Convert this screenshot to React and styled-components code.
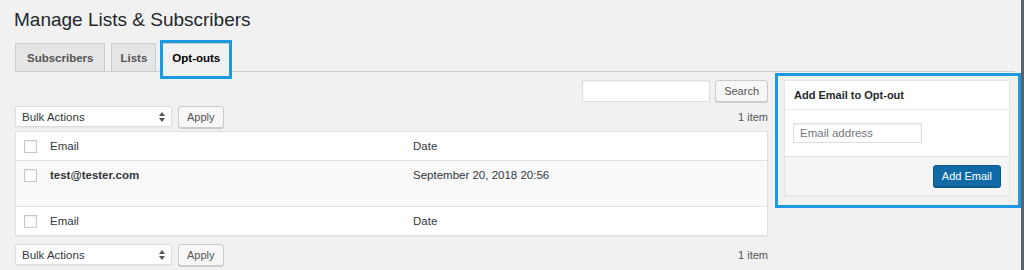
import styled, { createGlobalStyle } from "styled-components";

const GlobalStyles = createGlobalStyle`
  html, body {
    margin: 0;
    padding: 0;
    background: #f1f1f1;
  }
  body {
    font-family: "Liberation Sans", Arial, sans-serif;
    color: #32373c;
    font-size: 11px;
  }
`;

const Screen = styled.div`
  display: flex;
  width: 1024px;
  height: 270px;
  overflow: hidden;
`;

const Wrap = styled.div`
  flex: 1;
  display: flex;
  align-items: flex-start;
  padding: 8px 0 0 15px;
`;

const Edge = styled.div`
  width: 3px;
  background: #5a6168;
`;

const Main = styled.div`
  width: 753px;
  display: flex;
  flex-direction: column;
`;

const Title = styled.h1`
  margin: 0 0 0 -1px;
  font-size: 19px;
  line-height: 24px;
  font-weight: 400;
  color: #23282d;
`;

const TabNav = styled.nav`
  display: flex;
  gap: 6px;
  margin-top: 11px;
  width: 1000px;
  border-bottom: 1px solid #ccc;
`;

const Tab = styled.div`
  position: relative;
  box-sizing: border-box;
  height: 29px;
  margin-bottom: -1px;
  padding: 0 ${({ $pad }) => $pad}px;
  display: flex;
  align-items: center;
  font-weight: 700;
  font-size: 11.5px;
  color: ${({ $active }) => ($active ? "#000" : "#555")};
  background: ${({ $active }) => ($active ? "#f1f1f1" : "#e5e5e5")};
  border: 1px solid #ccc;
  border-bottom-color: ${({ $active }) => ($active ? "#f1f1f1" : "#ccc")};

  &::after {
    content: "";
    display: ${({ $active }) => ($active ? "block" : "none")};
    position: absolute;
    inset: -4px -3px -8px -3px;
    border: 3px solid #1a9be1;
  }
`;

const SearchRow = styled.div`
  display: flex;
  justify-content: flex-end;
  gap: 5px;
  margin-top: 8px;
`;

const TextInput = styled.div`
  box-sizing: border-box;
  width: ${({ $w }) => $w}px;
  height: ${({ $h }) => $h}px;
  background: #fff;
  border: 1px solid #ddd;
  box-shadow: inset 0 1px 2px rgba(0, 0, 0, 0.07);
  padding: 0 6px;
  display: flex;
  align-items: center;
  color: #72777c;
  font-size: 11.5px;
`;

const Button = styled.div`
  box-sizing: border-box;
  height: 22px;
  padding: 0 ${({ $pad }) => $pad}px;
  display: flex;
  align-items: center;
  background: #f7f7f7;
  border: 1px solid #ccc;
  border-radius: 3px;
  box-shadow: 0 1px 0 #ccc;
  color: #555;
  font-size: 11px;
`;

const PrimaryButton = styled(Button)`
  background: #0f6aa6;
  border-color: #0a5a8f;
  box-shadow: 0 1px 0 #0a5a8f;
  color: #fff;
`;

const TableNav = styled.div`
  display: flex;
  align-items: center;
  gap: 6px;
  margin-top: ${({ $top }) => $top}px;
  height: 21px;
`;

const Select = styled.div`
  box-sizing: border-box;
  width: 157px;
  height: 21px;
  background: #fff;
  border: 1px solid #ddd;
  border-radius: 2px;
  box-shadow: 0 1px 1px rgba(0, 0, 0, 0.04);
  padding: 0 6px;
  display: flex;
  align-items: center;
  justify-content: space-between;
  color: #32373c;
  font-size: 11.5px;
`;

const Count = styled.span`
  margin-left: auto;
  color: #555;
  font-size: 11px;
`;

const Table = styled.div`
  margin-top: 4px;
  background: #fff;
  border: 1px solid #e1e1e1;
  box-shadow: 0 1px 1px rgba(0, 0, 0, 0.04);
`;

const Row = styled.div`
  display: grid;
  grid-template-columns: 34px 363px 1fr;
  align-items: ${({ $top }) => ($top ? "start" : "center")};
  height: ${({ $h }) => $h}px;
  padding-top: ${({ $top }) => ($top ? "8px" : "0")};
  box-sizing: border-box;
  background: ${({ $alt }) => ($alt ? "#f9f9f9" : "#fff")};
  border-top: ${({ $line }) => ($line ? "1px solid #e1e1e1" : "none")};
  font-size: 11.5px;
  color: #32373c;
`;

const Check = styled.span`
  width: 13px;
  height: 13px;
  margin-left: 8px;
  box-sizing: border-box;
  background: #fff;
  border: 1px solid #c4c8cc;
  box-shadow: inset 0 1px 2px rgba(0, 0, 0, 0.08);
`;

const Cell = styled.span`
  font-weight: ${({ $bold }) => ($bold ? 700 : 400)};
`;

const Sidebar = styled.div`
  margin: 65px 0 0 7px;
  width: 246px;
  box-sizing: border-box;
  border: 3px solid #1a9be1;
  padding: 4px 8px 9px 6px;
`;

const Postbox = styled.div`
  background: #fff;
  border: 1px solid #e5e5e5;
  box-shadow: 0 1px 1px rgba(0, 0, 0, 0.04);
`;

const PostboxHead = styled.h2`
  margin: 0;
  height: 28px;
  padding: 0 9px;
  display: flex;
  align-items: center;
  font-size: 11px;
  font-weight: 700;
  color: #23282d;
  border-bottom: 1px solid #eee;
`;

const PostboxBody = styled.div`
  padding: 13px 8px 13px;
`;

const PostboxFoot = styled.div`
  display: flex;
  justify-content: flex-end;
  padding: 8px 8px 8px;
  background: #f5f5f5;
  border-top: 1px solid #ddd;
`;

const Arrows = () => (
  <svg width="6" height="10" viewBox="0 0 6 10">
    <path d="M3 0L6 4H0z" fill="#555" />
    <path d="M3 10L0 6h6z" fill="#555" />
  </svg>
);

const BulkNav = ({ top }) => (
  <TableNav $top={top}>
    <Select>
      Bulk Actions
      <Arrows />
    </Select>
    <Button $pad={8}>Apply</Button>
    <Count>1 item</Count>
  </TableNav>
);

export default function App() {
  return (
    <>
      <GlobalStyles />
      <Screen>
        <Wrap>
          <Main>
            <Title>Manage Lists &amp; Subscribers</Title>
            <TabNav>
              <Tab $pad={11}>Subscribers</Tab>
              <Tab $pad={8}>Lists</Tab>
              <Tab $pad={9} $active>
                Opt-outs
              </Tab>
            </TabNav>
            <SearchRow>
              <TextInput $w={128} $h={22} />
              <Button $pad={8}>Search</Button>
            </SearchRow>
            <BulkNav top={4} />
            <Table>
              <Row $h={28}>
                <Check />
                <Cell>Email</Cell>
                <Cell>Date</Cell>
              </Row>
              <Row $h={46} $alt $line $top>
                <Check />
                <Cell $bold>test@tester.com</Cell>
                <Cell>September 20, 2018 20:56</Cell>
              </Row>
              <Row $h={29} $line>
                <Check />
                <Cell>Email</Cell>
                <Cell>Date</Cell>
              </Row>
            </Table>
            <BulkNav top={8} />
          </Main>
          <Sidebar>
            <Postbox>
              <PostboxHead>Add Email to Opt-out</PostboxHead>
              <PostboxBody>
                <TextInput $w={129} $h={20}>
                  Email address
                </TextInput>
              </PostboxBody>
              <PostboxFoot>
                <PrimaryButton $pad={8}>Add Email</PrimaryButton>
              </PostboxFoot>
            </Postbox>
          </Sidebar>
        </Wrap>
        <Edge />
      </Screen>
    </>
  );
}
